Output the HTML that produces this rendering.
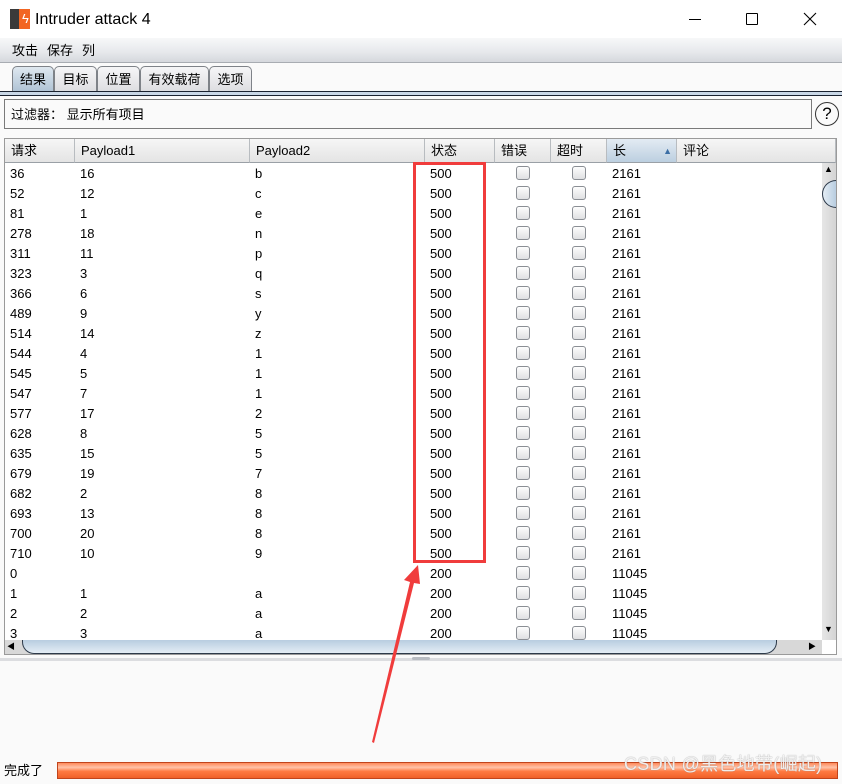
<!DOCTYPE html>
<html><head><meta charset="utf-8">
<style>
*{margin:0;padding:0;box-sizing:border-box}
body{width:842px;height:784px;overflow:hidden;background:#fafafa;font-family:"Liberation Sans","Noto Sans CJK SC",sans-serif;font-size:13px;color:#000;position:relative}
.a{position:absolute}
.title{left:0;top:0;width:842px;height:38px;background:#fff}
.menu{left:0;top:38px;width:842px;height:25px;background:linear-gradient(#f7f8f9,#e6e8eb 60%,#d5d8dd);border-bottom:1px solid #a8acb2}
.tab{top:66px;height:26px;border:1px solid #7e8288;border-bottom:none;border-radius:5px 5px 0 0;background:linear-gradient(#f6f6f7,#dcdde0);text-align:center;line-height:25px;font-size:13px}
.tab.sel{background:linear-gradient(#dfe8f0,#aec2d4)}
.hdr{top:139px;height:24px;background:linear-gradient(#f6f6f6,#e4e4e4);border-bottom:1px solid #9aa0a6;border-right:1px solid #b8bcc0;line-height:24px;padding-left:6px}
.row{left:5px;width:817px;height:20px;line-height:21px}
.row span{position:absolute;top:0}
.cb{position:absolute;top:3px;width:14px;height:14px;border:1px solid #8a8e94;border-radius:3px;background:linear-gradient(#fdfdfd,#dfe0e2)}
</style></head><body>
<div class="a title"></div>
<div class="a" style="left:10px;top:9px;width:9px;height:20px;background:#3a3a3a"></div>
<div class="a" style="left:19px;top:9px;width:11px;height:20px;background:#f26522"></div>
<div class="a" style="left:22px;top:11px;color:#fff;font-size:13px;line-height:16px">ϟ</div>
<div class="a" style="left:35px;top:9px;font-size:16px;line-height:21px">Intruder attack 4</div>
<div class="a" style="left:689px;top:19px;width:12px;height:1px;background:#000"></div>
<div class="a" style="left:746px;top:13px;width:12px;height:12px;border:1px solid #000;border-radius:1px"></div>
<svg class="a" style="left:803px;top:12px" width="14" height="14"><path d="M1 1L13 13M13 1L1 13" stroke="#000" stroke-width="1.1"/></svg>
<div class="a menu"></div>
<div class="a" style="left:12px;top:42px;line-height:18px">攻击</div>
<div class="a" style="left:47px;top:42px;line-height:18px">保存</div>
<div class="a" style="left:82px;top:42px;line-height:18px">列</div>
<div class="a tab sel" style="left:12px;width:42px">结果</div>
<div class="a tab" style="left:54px;width:43px">目标</div>
<div class="a tab" style="left:97px;width:43px">位置</div>
<div class="a tab" style="left:140px;width:69px">有效载荷</div>
<div class="a tab" style="left:209px;width:43px">选项</div>
<div class="a" style="left:0;top:91px;width:842px;height:5px;background:#c9d7e6;border-top:1px solid #1a2230;border-bottom:1px solid #1a2230"></div>
<div class="a" style="left:4px;top:99px;width:808px;height:30px;border:1px solid #7a7a7a;background:#fafafa;line-height:29px;padding-left:6px">过滤器：&nbsp;显示所有项目</div>
<div class="a" style="left:815px;top:102px;width:24px;height:24px;border:1.5px solid #333;border-radius:50%;text-align:center;line-height:21px;font-size:17px">?</div>
<div class="a" style="left:4px;top:138px;width:833px;height:517px;border:1px solid #9a9a9a;background:#fff"></div>
<div class="a hdr" style="left:5px;width:70px">请求</div>
<div class="a hdr" style="left:75px;width:175px">Payload1</div>
<div class="a hdr" style="left:250px;width:175px">Payload2</div>
<div class="a hdr" style="left:425px;width:70px">状态</div>
<div class="a hdr" style="left:495px;width:56px">错误</div>
<div class="a hdr" style="left:551px;width:56px">超时</div>
<div class="a hdr" style="left:607px;width:70px;background:linear-gradient(#e3ebf3,#bccfe0)">长<span style="position:absolute;right:4px;top:0;font-size:9px;color:#3b6ea5">▲</span></div>
<div class="a hdr" style="left:677px;width:159px">评论</div>
<div id="rows"></div>
<div class="a" style="left:822px;top:163px;width:14px;height:477px;background:linear-gradient(90deg,#e6e6e6,#d4d4d4)"></div>
<div class="a" style="left:824px;top:164px;font-size:9px">▲</div>
<div class="a" style="left:822px;top:180px;width:14px;height:28px;border:1px solid #2d3a4a;border-radius:14px 0 0 14px;border-right:none;background:linear-gradient(90deg,#e4edf5,#b8cde0)"></div>
<div class="a" style="left:824px;top:624px;font-size:9px">▼</div>
<div class="a" style="left:5px;top:640px;width:817px;height:14px;background:#d8d8d8"></div>
<div class="a" style="left:7px;top:641px;font-size:8px">◀</div>
<div class="a" style="left:22px;top:640px;width:755px;height:14px;border:1px solid #2d3a4a;border-top:none;border-radius:0 0 12px 12px;background:linear-gradient(#b8cde0,#e4edf5)"></div>
<div class="a" style="left:808px;top:641px;font-size:8px">▶</div>
<div class="a" style="left:0;top:658px;width:842px;height:3px;background:#dcdde0"></div>
<div class="a" style="left:412px;top:657px;width:18px;height:3px;background:#b8bcc2;border-radius:2px"></div>
<div class="a" style="left:4px;top:762px;line-height:18px">完成了</div>
<div class="a" style="left:57px;top:762px;width:781px;height:17px;border:1px solid #c0441c;background:linear-gradient(#ff8a5a,#ffc2a8 30%,#ff7a42 55%,#f06028)"></div>
<div class="a" style="left:624px;top:752px;font-size:18px;letter-spacing:0.3px;color:rgba(255,255,255,.85);text-shadow:0 0 1px #888;line-height:24px;white-space:nowrap">CSDN @黑色地带(崛起)</div>
<div class="a" style="left:413px;top:162px;width:73px;height:401px;border:3px solid #f03c3c"></div>
<svg class="a" style="left:0;top:0" width="842" height="784"><polygon points="372,742 410,582 404,580 418,565 420,584 414,583 374,743" fill="#f03c3c"/></svg>
<script>
var d=[["36","16","b",500,2161],["52","12","c",500,2161],["81","1","e",500,2161],["278","18","n",500,2161],["311","11","p",500,2161],["323","3","q",500,2161],["366","6","s",500,2161],["489","9","y",500,2161],["514","14","z",500,2161],["544","4","1",500,2161],["545","5","1",500,2161],["547","7","1",500,2161],["577","17","2",500,2161],["628","8","5",500,2161],["635","15","5",500,2161],["679","19","7",500,2161],["682","2","8",500,2161],["693","13","8",500,2161],["700","20","8",500,2161],["710","10","9",500,2161],["0","","",200,11045],["1","1","a",200,11045],["2","2","a",200,11045],["3","3","a",200,11045]];
var h="";d.forEach(function(r,i){var t=163+i*20;h+='<div class="a row" style="top:'+t+'px;'+(i==23?'height:17px;overflow:hidden;':'')+'"><span style="left:5px">'+r[0]+'</span><span style="left:75px">'+r[1]+'</span><span style="left:250px">'+r[2]+'</span><span style="left:425px">'+r[3]+'</span><div class="cb" style="left:511px"></div><div class="cb" style="left:567px"></div><span style="left:607px">'+r[4]+'</span></div>';});
document.getElementById("rows").innerHTML=h;
</script>
</body></html>
